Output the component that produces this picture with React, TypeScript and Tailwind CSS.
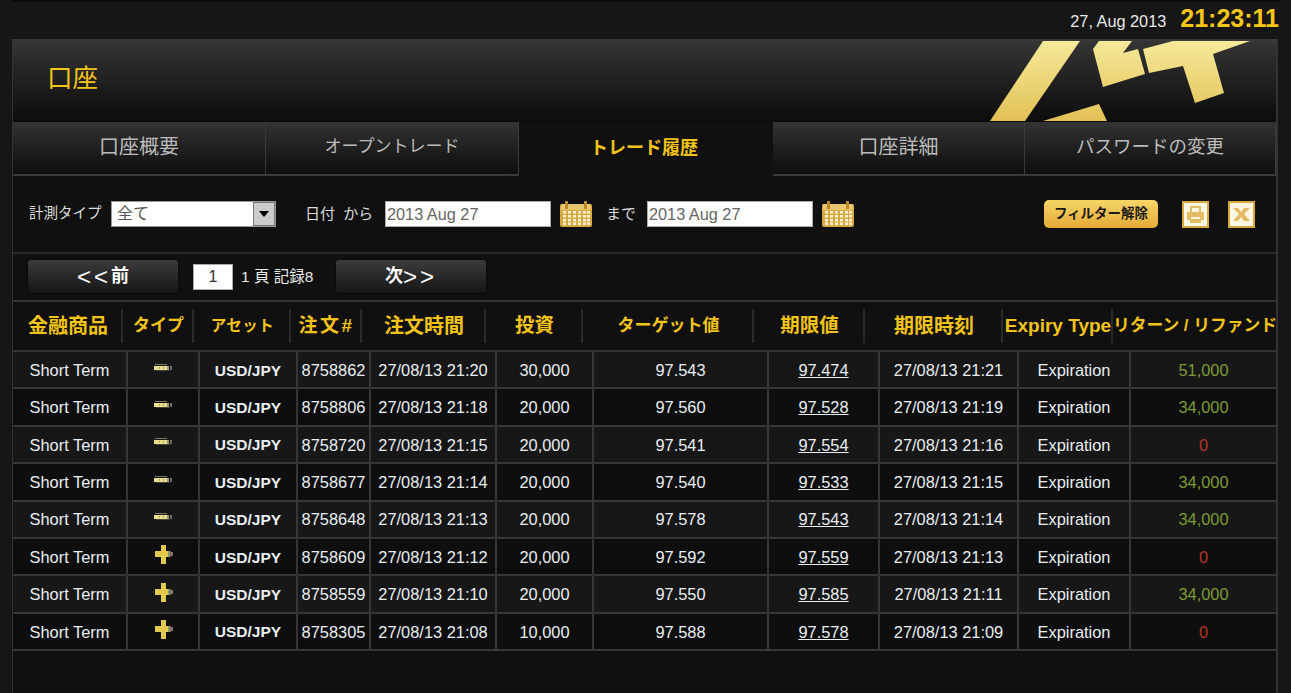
const F = '"Liberation Sans","Noto Sans CJK JP",sans-serif';
const heads: [string, number, string][] = [
["金融商品",110,"text-[20px]"],["タイプ",71,"text-[17px]"],["アセット",97,"text-[15.5px] tracking-[0.5px]"],["注文#",71,"text-[19px] tracking-[2.5px]"],["注文時間",124,"text-[20px]"],["投資",97,"text-[19.5px]"],["ターゲット値",171,"text-[17px]"],["期限値",111,"text-[19.5px]"],["期限時刻",138,"text-[20px]"],["Expiry Type",110,"text-[19px]"],["リターン / リファンド",164,"text-[16.8px]"]];
const widths = [115,72,98,73,126,97,175,111,139,112,145];
const tabs: [string, number, string][] = [["口座概要",253,"text-[20px]"],["オープントレード",253,"text-[17px]"],["トレード履歴",254,"text-[18px] pr-[4px]"],["口座詳細",252,"text-[20px]"],["パスワードの変更",251,"text-[18.5px]"]];
const rows = [
["8758862","27/08/13 21:20","30,000","97.543","97.474","27/08/13 21:21","51,000",0],
["8758806","27/08/13 21:18","20,000","97.560","97.528","27/08/13 21:19","34,000",0],
["8758720","27/08/13 21:15","20,000","97.541","97.554","27/08/13 21:16","0",0],
["8758677","27/08/13 21:14","20,000","97.540","97.533","27/08/13 21:15","34,000",0],
["8758648","27/08/13 21:13","20,000","97.578","97.543","27/08/13 21:14","34,000",0],
["8758609","27/08/13 21:12","20,000","97.592","97.559","27/08/13 21:13","0",1],
["8758559","27/08/13 21:10","20,000","97.550","97.585","27/08/13 21:11","34,000",1],
["8758305","27/08/13 21:08","10,000","97.588","97.578","27/08/13 21:09","0",1],
] as (string|number)[][];
function Cal(){return <svg width="32" height="26" viewBox="0 0 32 26" className="shrink-0"><rect x="0" y="3" width="32" height="23" rx="2" fill="#d8a93f"/><rect x="1" y="3" width="30" height="6" fill="#e9c56f"/><rect x="5" y="0" width="3" height="8" fill="#b98a25"/><rect x="24" y="0" width="3" height="8" fill="#b98a25"/>{[10,14,18,21.5].map(y=>[3,8,13,18,23,27].map(x=><rect key={x+"-"+y} x={x} y={y} width="3" height="2.5" fill="#fdf3d8"/>))}</svg>}
function Chev(){return <svg width="20" height="8" viewBox="0 0 20 8"><rect x="1" y="0" width="12" height="1" fill="#77775c"/><rect x="0" y="2" width="13" height="4" fill="#e8de8c"/><rect x="5" y="3" width="1" height="2" fill="#a8a268"/><rect x="9" y="3" width="1" height="2" fill="#a8a268"/><rect x="13" y="2" width="2" height="4" fill="#9a9a7a"/><rect x="16" y="2" width="2" height="4" fill="#6e6e62"/><rect x="2" y="6" width="14" height="1" fill="#44443a"/></svg>}
function Plus(){return <svg width="20" height="19" viewBox="0 0 20 19"><path d="M7 0h5v6h2v6h-2v7H7v-7H1V6h6z" fill="#e3c94f"/><rect x="14" y="6" width="2" height="6" fill="#7d9a6a"/><rect x="16" y="6" width="1" height="6" fill="#a8564a"/><rect x="17" y="7" width="2" height="4" fill="#777"/></svg>}
export default function App(){return(
<div className="w-[1291px] h-[693px] bg-[#161616] overflow-hidden flex flex-col px-3" style={{fontFamily:F}}>
<div className="h-[39px] flex items-center justify-end gap-[14px] shrink-0 border-t-2 border-[#0a0a0a]">
<span className="text-[16.3px] text-[#e8e8e8] pt-[1px]">27, Aug 2013</span>
<span className="text-[25px] font-bold text-[#f5c518] pb-[3px]">21:23:11</span>
</div>
<div className="w-[1266px] flex-1 border-l border-r-2 border-[#333] flex flex-col bg-[#101010]">
<div className="relative h-[83px] shrink-0 bg-gradient-to-b from-[#353535] to-[#0c0c0c] border-t-2 border-[#3a3a3a] flex items-center pl-[34px] pb-[6px] overflow-hidden">
<span className="text-[25.5px] text-[#f2c318]">口座</span>
<svg className="absolute left-[977px] top-0" width="262" height="81" viewBox="0 0 262 81"><defs><linearGradient id="g" gradientUnits="userSpaceOnUse" x1="0" y1="0" x2="0" y2="81"><stop offset="0" stopColor="#f6e99a"/><stop offset="1" stopColor="#e2c155"/></linearGradient></defs><g fill="url(#g)"><path d="M53 0h37L35 80H0z"/><path d="M53 80l56-17 8 17z"/><path d="M103 8l6-8h33l-9 12 15-4 7 25-42 13z"/><path d="M153 8l30-8h77l-37 13 11 39-29 10-12-37-34 7z"/></g></svg>
</div>
<div className="flex h-[54px] shrink-0">
{tabs.map(([t,w,s],i)=>i===2?
<div key={t} style={{width:w}} className={"shrink-0 flex items-center justify-center pb-[2px] text-[#f2c318] font-bold "+s}>{t}</div>:
<div key={t} style={{width:w}} className={"shrink-0 flex items-center justify-center pb-[2px] text-[#bbb] bg-gradient-to-b from-[#333] to-[#0e0e0e] border-b-2 border-r border-[#3a3a3a] "+s}>{t}</div>)}
</div>
<div className="h-[78px] shrink-0 flex items-center border-b-2 border-[#2a2a2a] pl-[16px] text-[15px] text-[#ddd]">
<span className="w-[82px] text-[14.5px] whitespace-nowrap">計測タイプ</span>
<div className="w-[165px] h-[26px] bg-white border border-[#999] flex items-center pl-[5px] text-[#555] text-[16px] justify-between">全て<span className="w-[22px] h-full bg-[#ccc] border border-[#777] flex items-center justify-center"><span className="w-0 h-0 border-x-[5px] border-x-transparent border-t-[6px] border-t-black"/></span></div>
<span className="ml-[29px] w-[80px] whitespace-pre">日付  から</span>
<div className="w-[166px] h-[26px] bg-white border border-[#aaa] flex items-center pl-[1px] text-[#666] text-[16.3px]">2013 Aug 27</div>
<span className="ml-[9px]"><Cal/></span>
<span className="ml-[14px] w-[41px]">まで</span>
<div className="w-[166px] h-[26px] bg-white border border-[#aaa] flex items-center pl-[1px] text-[#666] text-[16.3px]">2013 Aug 27</div>
<span className="ml-[9px]"><Cal/></span>
<button className="ml-[190px] w-[114px] h-[28px] rounded-[5px] bg-gradient-to-b from-[#f6d568] to-[#e5ab35] text-[13.5px] font-bold text-[#1a1a1a] flex items-center justify-center whitespace-nowrap">フィルター解除</button>
<span className="ml-[24px] w-[27px] h-[27px] border-2 border-[#d8a93f] bg-[#fdf6e3] flex items-center justify-center"><svg width="19" height="19" viewBox="0 0 19 19"><path d="M4 1h11v6h3v8h-3v3H4v-3H1V7h3z" fill="#e3bd65"/><rect x="6" y="3" width="7" height="4" fill="#fdf6e3"/><rect x="5" y="12" width="9" height="2" fill="#fdf6e3"/></svg></span>
<span className="ml-[19px] w-[27px] h-[27px] border-2 border-[#d8a93f] bg-[#fdf6e3] flex items-center justify-center"><svg width="19" height="19" viewBox="0 0 19 19"><path d="M1 3h5l3 4 3-4h6l-6 6 6 7h-6l-3-4-3 4H1l6-7z" fill="#e3bd65"/></svg></span>
</div>
<div className="h-[48px] shrink-0 flex items-center pl-[15px] pb-[1px] border-b-2 border-[#333] text-[#e8e8e8]">
<button className="w-[150px] h-[33px] rounded-[3px] bg-gradient-to-b from-[#3c3c3c] to-[#161616] shadow-[0_0_2px_#000] text-white flex items-center justify-center"><span className="text-[24px] tracking-[3px] leading-none">&lt;&lt;</span><span className="text-[18px] font-bold">前</span></button>
<div className="ml-[15px] w-[40px] h-[26px] bg-white border border-[#aaa] flex items-center justify-center text-[#333] text-[16px]">1</div>
<span className="ml-[8px] w-[95px] text-[15.5px] whitespace-nowrap">1 頁 記録8</span>
<button className="w-[150px] h-[33px] rounded-[3px] bg-gradient-to-b from-[#3c3c3c] to-[#161616] shadow-[0_0_2px_#000] text-white flex items-center justify-center"><span className="text-[18px] font-bold">次</span><span className="text-[24px] tracking-[3px] leading-none">&gt;&gt;</span></button>
</div>
<div className="h-[50px] shrink-0 flex items-center border-b-2 border-[#333] font-bold text-[#f2c318]">
{heads.map(([h,w,s],i)=><div key={h} style={{width:w}} className={"h-[34px] flex items-center justify-center whitespace-nowrap shrink-0 "+(i<10?"pl-[2px] border-r-2 border-[#2a2a2a] ":"")+s}>{h}</div>)}
</div>
<div className="flex flex-col">
{rows.map((r,i)=><div key={i} className={"h-[37.4px] flex items-center border-b-2 border-[#363636] "+(i%2?"bg-[#0e0e0e]":"bg-[#171717]")}>
{["Short Term","",'USD/JPY',r[0],r[1],r[2],r[3],r[4],r[5],"Expiration",r[6]].map((c,j)=><div key={j} style={{width:widths[j]}} className={"flex items-center justify-center h-full pt-[1px] shrink-0 whitespace-nowrap text-[#e8eef2] "+(j<10?"border-r-2 border-[#363636] ":"")+(j===2?"font-bold text-[15.5px] ":"text-[16.4px] ")+(j===10?(c==="0"?"!text-[#b5352a]":"!text-[#7d9a34]"):"")}>
{j===1?<span className="mb-[5px] ml-[2px]">{r[7]?<Plus/>:<Chev/>}</span>:j===7?<u>{c}</u>:c}</div>)}
</div>)}
</div>
</div>
</div>)}
